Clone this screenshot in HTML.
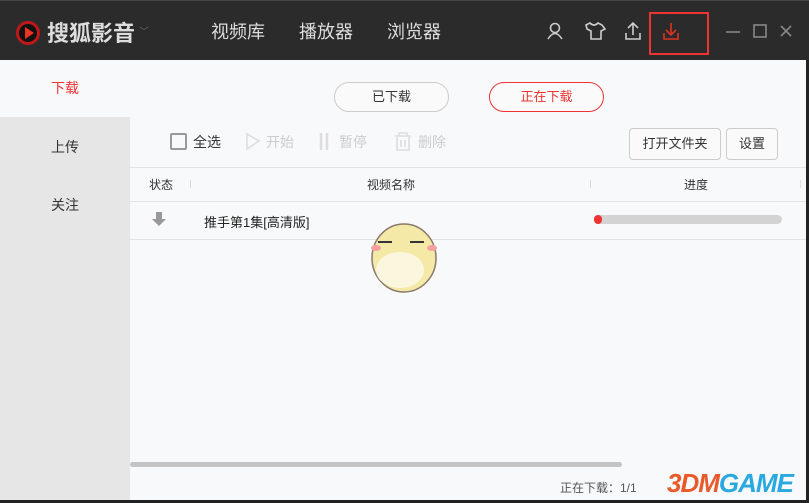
<!DOCTYPE html>
<html><head><meta charset="utf-8"><style>
*{margin:0;padding:0;box-sizing:border-box}
body{width:809px;height:503px;overflow:hidden;background:#f8f9fb;font-family:"Liberation Sans","Noto Sans CJK SC",sans-serif;position:relative}
.top{position:absolute;left:0;top:0;width:809px;height:60px;background:#2b2b2b;border-top:1px solid #444}
.t{position:absolute;color:#ddd}
.side{position:absolute;left:0;top:60px;width:130px;height:443px;background:#e6e6e6}
.side div{position:absolute;left:0;width:130px;text-align:center;font-size:14px;color:#333}
.btn{position:absolute;border:1px solid #ccc;border-radius:4px;background:#fafafa;font-size:13px;color:#333;text-align:center}
.g{color:#ccc;font-size:14px;position:absolute}
.sep{position:absolute;top:180px;width:1px;height:8px;background:#ddd}
</style></head><body>
<div class="top">
<svg style="position:absolute;left:15px;top:19px" width="26" height="26"><circle cx="13" cy="13" r="12" fill="#c01818"/><circle cx="13" cy="13" r="9" fill="#111"/><path d="M10 7 L19 13 L10 19Z" fill="#e32"/></svg>
<div class="t" style="left:47px;top:15px;font-size:22px;font-weight:bold">搜狐影音</div>
<div class="t" style="left:139px;top:22px;font-size:10px;color:#666">﹀</div>
<div class="t" style="left:211px;top:17px;font-size:18px">视频库</div>
<div class="t" style="left:299px;top:17px;font-size:18px">播放器</div>
<div class="t" style="left:387px;top:17px;font-size:18px">浏览器</div>
<svg style="position:absolute;left:540px;top:18px" width="260" height="26" fill="none" stroke="#ccc" stroke-width="1.6">
<circle cx="15" cy="9" r="4.5"/><path d="M8 20 Q15 9 22 20"/>
<path d="M46 6 L50 4 Q54 8 58 4 L62 6 L65 10 L61 12 V20 H51 V12 L47 10Z"/>
<path d="M93 4 V16 M88 9 L93 4 L98 9 M86 14 V20 H100 V14"/>
<path d="M131 4 V16 M126 11 L131 16 L136 11 M124 14 V20 H138 V14" stroke="#d32"/>
<path d="M186 13 H200" stroke="#888"/><rect x="214" y="6" width="12" height="12" stroke="#888"/><path d="M241 7 L251 17 M251 7 L241 17" stroke="#888"/>
</svg>
<div style="position:absolute;left:649px;top:11px;width:60px;height:43px;border:2px solid #e33"></div>
</div>
<div class="side">
<div style="top:0;height:57px;background:#f8f9fb;line-height:57px;color:#e33">下载</div>
<div style="top:77px">上传</div>
<div style="top:135px">关注</div>
</div>
<div class="btn" style="left:334px;top:82px;width:115px;height:30px;border-radius:15px;line-height:28px">已下载</div>
<div class="btn" style="left:489px;top:82px;width:115px;height:30px;border-radius:15px;line-height:28px;border-color:#e33;color:#e33">正在下载</div>
<div style="position:absolute;left:170px;top:133px;width:17px;height:17px;border:2px solid #999;border-radius:2px"></div>
<div style="position:absolute;left:193px;top:132px;font-size:14px;color:#333">全选</div>
<svg style="position:absolute;left:245px;top:132px" width="220" height="20" fill="none" stroke="#ddd" stroke-width="1.6"><path d="M2 2 L14 9 L2 17Z"/><path d="M76 1 V18 M82 1 V18" stroke-width="2.5"/><path d="M150 4 H166 M154 4 V1 H162 V4 M152 5 V18 H164 V5 M156 8 V15 M160 8 V15"/></svg>
<div class="g" style="left:266px;top:132px">开始</div>
<div class="g" style="left:339px;top:132px">暂停</div>
<div class="g" style="left:418px;top:132px">删除</div>
<div class="btn" style="left:629px;top:128px;width:92px;height:32px;line-height:30px">打开文件夹</div>
<div class="btn" style="left:726px;top:128px;width:52px;height:32px;line-height:30px">设置</div>
<div style="position:absolute;left:130px;top:167px;width:679px;height:1px;background:#e3e3e3"></div>
<div style="position:absolute;left:149px;top:176px;font-size:12px;color:#333">状态</div>
<div class="sep" style="left:190px"></div><div class="sep" style="left:590px"></div><div class="sep" style="left:800px"></div>
<div style="position:absolute;left:367px;top:176px;font-size:12px;color:#333">视频名称</div>
<div style="position:absolute;left:684px;top:176px;font-size:12px;color:#333">进度</div>
<div style="position:absolute;left:130px;top:201px;width:679px;height:1px;background:#e3e3e3"></div>
<div style="position:absolute;left:130px;top:239px;width:679px;height:1px;background:#e3e3e3"></div>
<svg style="position:absolute;left:152px;top:212px" width="14" height="15"><path d="M4 0 H10 V7 H14 L7 14 L0 7 H4Z" fill="#999"/></svg>
<div style="position:absolute;left:204px;top:212px;font-size:13px;color:#222">推手第1集[高清版]</div>
<div style="position:absolute;left:594px;top:215px;width:188px;height:9px;background:#d3d3d3;border-radius:5px"></div>
<div style="position:absolute;left:594px;top:215px;width:8px;height:9px;background:#e33;border-radius:5px"></div>
<svg style="position:absolute;left:352px;top:208px" width="104" height="86"><ellipse cx="52" cy="50" rx="32" ry="34" fill="#f5e9a8" stroke="#8a7a6a" stroke-width="1.5"/><ellipse cx="48" cy="62" rx="24" ry="18" fill="#fbf6de"/><path d="M26 34 H40 M58 34 H72" stroke="#333" stroke-width="2"/><ellipse cx="24" cy="40" rx="5" ry="3" fill="#f7a0a0"/><ellipse cx="80" cy="40" rx="5" ry="3" fill="#f7a0a0"/></svg>
<div style="position:absolute;left:130px;top:462px;width:492px;height:5px;background:#c4c4c4;border-radius:3px"></div>
<div style="position:absolute;left:560px;top:479px;font-size:12px;color:#555">正在下载：1/1</div>
<div style="position:absolute;left:667px;top:468px;font-size:26px;line-height:30px;font-weight:bold;color:#e85a2a;font-style:italic;letter-spacing:-1px">3DM<span style="color:#2aa8e0">GAME</span></div>
<div style="position:absolute;left:806px;top:60px;width:3px;height:443px;background:#222"></div>
<div style="position:absolute;left:0;top:500px;width:809px;height:3px;background:#222"></div>
</body></html>
